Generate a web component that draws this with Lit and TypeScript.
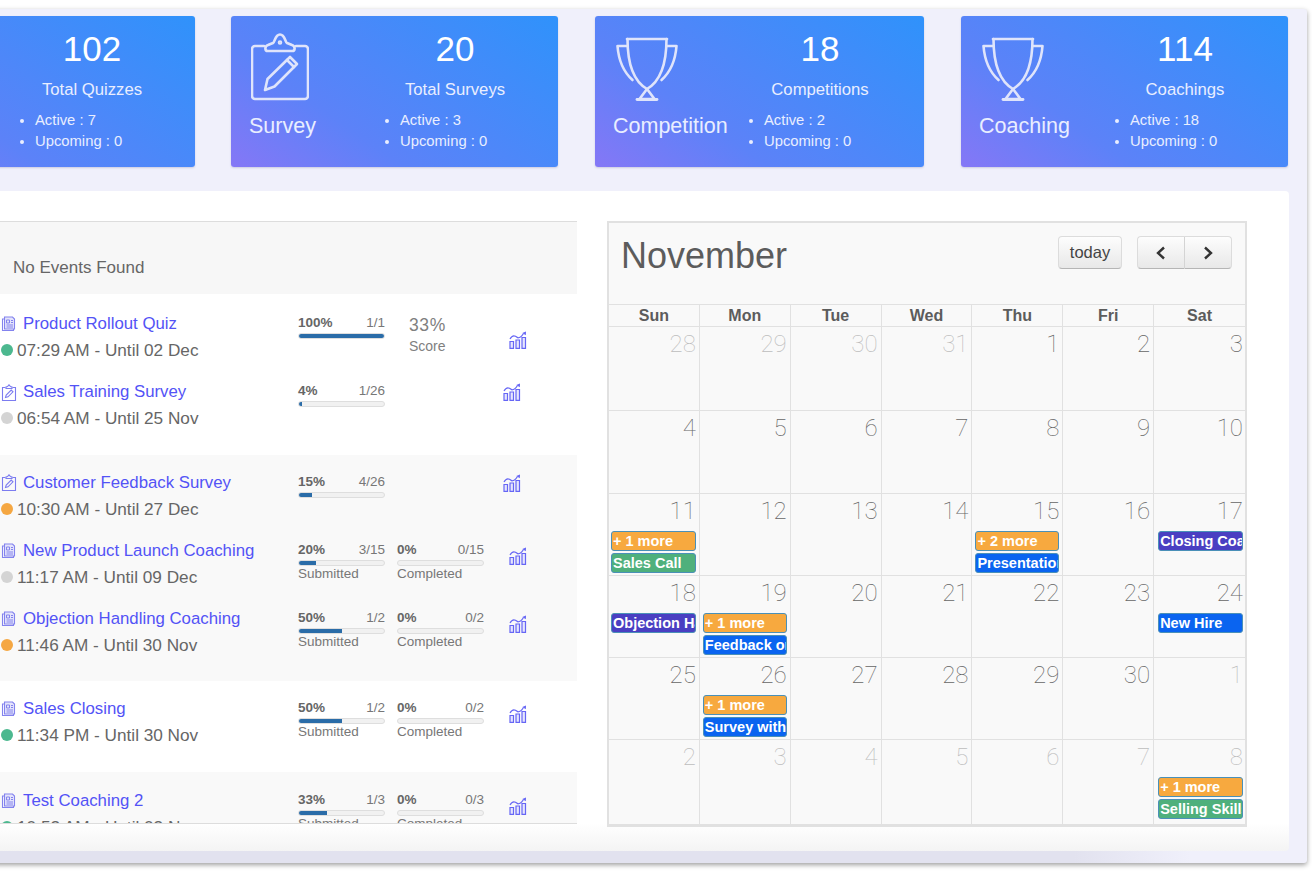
import { LitElement, css, html, nothing, svg } from 'lit'
import { customElement } from 'lit/decorators.js'

type Stat = { pct: number; value: string; label?: string }
type Row = {
  name: string
  kind: 'doc' | 'clip'
  time: string
  dot: string
  stats: Stat[]
  score?: string
  chartX: number
  chartY: number
}
type Group = { shaded: boolean; padTop: number; padBottom: number; rows: Row[] }
type CalEvent = { text: string; color: string }
type Day = { n: number; muted?: boolean; events?: CalEvent[] }

const GREEN = '#4cb88f'
const GREY = '#d4d4d4'
const ORANGE = '#f5a742'

const groups: Group[] = [
  {
    shaded: false,
    padTop: 13,
    padBottom: 12,
    rows: [
      { name: 'Product Rollout Quiz', kind: 'doc', time: '07:29 AM - Until 02 Dec', dot: GREEN, stats: [{ pct: 100, value: '1/1' }], score: '33%', chartX: 509, chartY: 24 },
      { name: 'Sales Training Survey', kind: 'clip', time: '06:54 AM - Until 25 Nov', dot: GREY, stats: [{ pct: 4, value: '1/26' }], chartX: 503, chartY: 8 },
    ],
  },
  {
    shaded: true,
    padTop: 10.5,
    padBottom: 11.5,
    rows: [
      { name: 'Customer Feedback Survey', kind: 'clip', time: '10:30 AM - Until 27 Dec', dot: ORANGE, stats: [{ pct: 15, value: '4/26' }], chartX: 503, chartY: 8 },
      { name: 'New Product Launch Coaching', kind: 'doc', time: '11:17 AM - Until 09 Dec', dot: GREY, stats: [{ pct: 20, value: '3/15', label: 'Submitted' }, { pct: 0, value: '0/15', label: 'Completed' }], chartX: 509, chartY: 13 },
      { name: 'Objection Handling Coaching', kind: 'doc', time: '11:46 AM - Until 30 Nov', dot: ORANGE, stats: [{ pct: 50, value: '1/2', label: 'Submitted' }, { pct: 0, value: '0/2', label: 'Completed' }], chartX: 509, chartY: 13 },
    ],
  },
  {
    shaded: false,
    padTop: 11,
    padBottom: 12,
    rows: [
      { name: 'Sales Closing', kind: 'doc', time: '11:34 PM - Until 30 Nov', dot: GREEN, stats: [{ pct: 50, value: '1/2', label: 'Submitted' }, { pct: 0, value: '0/2', label: 'Completed' }], chartX: 509, chartY: 13 },
    ],
  },
  {
    shaded: true,
    padTop: 12,
    padBottom: 12,
    rows: [
      { name: 'Test Coaching 2', kind: 'doc', time: '10:52 AM - Until 03 Nov', dot: GREEN, stats: [{ pct: 33, value: '1/3', label: 'Submitted' }, { pct: 0, value: '0/3', label: 'Completed' }], chartX: 509, chartY: 13 },
    ],
  },
]

const more = (n: number): CalEvent => ({ text: `+ ${n} more`, color: '#f7a93f' })
const ev = {
  green: (text: string): CalEvent => ({ text, color: '#4fb07c' }),
  blue: (text: string): CalEvent => ({ text, color: '#0a64f0' }),
  indigo: (text: string): CalEvent => ({ text, color: '#4a3fc2' }),
}

const weeks: Day[][] = [
  [{ n: 28, muted: true }, { n: 29, muted: true }, { n: 30, muted: true }, { n: 31, muted: true }, { n: 1 }, { n: 2 }, { n: 3 }],
  [{ n: 4 }, { n: 5 }, { n: 6 }, { n: 7 }, { n: 8 }, { n: 9 }, { n: 10 }],
  [
    { n: 11, events: [more(1), ev.green('Sales Call')] },
    { n: 12 },
    { n: 13 },
    { n: 14 },
    { n: 15, events: [more(2), ev.blue('Presentation Skills')] },
    { n: 16 },
    { n: 17, events: [ev.indigo('Closing Coaching')] },
  ],
  [
    { n: 18, events: [ev.indigo('Objection Handling')] },
    { n: 19, events: [more(1), ev.blue('Feedback on Sales')] },
    { n: 20 },
    { n: 21 },
    { n: 22 },
    { n: 23 },
    { n: 24, events: [ev.blue('New Hire')] },
  ],
  [
    { n: 25 },
    { n: 26, events: [more(1), ev.blue('Survey with Team')] },
    { n: 27 },
    { n: 28 },
    { n: 29 },
    { n: 30 },
    { n: 1, muted: true },
  ],
  [
    { n: 2, muted: true },
    { n: 3, muted: true },
    { n: 4, muted: true },
    { n: 5, muted: true },
    { n: 6, muted: true },
    { n: 7, muted: true },
    { n: 8, muted: true, events: [more(1), ev.green('Selling Skills')] },
  ],
]

const summary = [
  { icon: 'doc', title: 'Quiz', count: '102', label: 'Total Quizzes', active: 7, upcoming: 0 },
  { icon: 'clip', title: 'Survey', count: '20', label: 'Total Surveys', active: 3, upcoming: 0 },
  { icon: 'cup', title: 'Competition', count: '18', label: 'Competitions', active: 2, upcoming: 0 },
  { icon: 'cup', title: 'Coaching', count: '114', label: 'Coachings', active: 18, upcoming: 0 },
]

const clipIcon = svg`<svg width="58" height="68" viewBox="0 0 58 68" fill="none" stroke="#dfe4fb" stroke-width="2.6" stroke-linejoin="round" stroke-linecap="round">
  <path d="M13 13H4a3 3 0 0 0-3 3v47a3 3 0 0 0 3 3h50a3 3 0 0 0 3-3V16a3 3 0 0 0-3-3h-9" />
  <path d="M17 18h24c3.500 0 3.500-5 0-6l-5-2c-2-1-2-8.500-7-8.500S24 9 22 10l-5 2c-3.500 1-3.500 6 0 6z" />
  <circle cx="29" cy="9.500" r="1" />
  <path d="M14 57l2.500-11L39 24l7 7-22.500 22.500z" />
  <path d="M36 27l7 7" />
</svg>`

const cupIcon = svg`<svg class="cup" width="62" height="64" viewBox="0 0 62 64" fill="none" stroke="#dfe4fb" stroke-width="2.6" stroke-linejoin="round" stroke-linecap="round">
  <path d="M11 2h40" />
  <path d="M11.500 2c0 22 4 41 19.500 50C46.500 43 50.500 24 50.500 2" />
  <path d="M11.500 9H1.500c1 13 5 25 15 34M50.500 9h10c-1 13-5 25-15 34" />
  <path d="M31 52l-7.500 10h15z" />
  <path d="M21 62.500h20" stroke-width="2.800" />
</svg>`

const smallDoc = svg`<svg width="16" height="16" viewBox="0 0 16 16" fill="none" stroke="#8383ee" stroke-width="1.100">
  <path d="M3.500 1h8l2 2v10h-10z" fill="#e4e4fb" />
  <path d="M3.500 3H1.500v11.500h11V13" />
  <path d="M5.500 4h3v3h-3zM10 4.500h2M10 6.500h2M5.500 9h6.500M5.500 11h6.500" stroke-width="1" />
</svg>`

const smallClip = svg`<svg width="16" height="17" viewBox="0 0 16 17" fill="none" stroke="#7c7cf0" stroke-width="1.100">
  <path d="M4.500 3.500H1.500v13h13v-13h-3" />
  <path d="M5 4.500h6V3L9.500 2.500 8 .8 6.500 2.500 5 3z" />
  <path d="M4.500 13.500l.7-2.500 5-5 1.800 1.800-5 5z" />
</svg>`

const chartIcon = svg`<svg width="18" height="18" viewBox="0 0 18 18" fill="none" stroke="#6666f5" stroke-width="1.200">
  <path d="M1 17.400V10.500h3.500v6.900zM7 17.400V9h3.500v8.400zM13 17.400V6.500h3.500v10.900z" fill="#e6e6fd" />
  <path d="M1 8c1.500-2.800 3.500-3.800 5.500-2.800L9 6.800c2 0 4-1.800 5.500-4.300" />
  <path d="M13.300 2l3.700-1.500-.2 3.800z" fill="#6666f5" stroke="none" />
</svg>`

@customElement('app-root')
export class AppRoot extends LitElement {
  static styles = css`
    :host {
      display: block;
      width: 1312px;
      height: 874px;
      overflow: hidden;
      background: #fff;
      font-family: 'Liberation Sans', Arial, sans-serif;
      color: #666;
    }
    .frame {
      box-sizing: border-box;
      width: 1457px;
      height: 854px;
      margin: 9px 0 0 -150px;
      padding-top: 7px;
      background: linear-gradient(to right, #e2e2ef 84%, #f0f0fb 92%) left bottom / 100% 12px no-repeat, #f0f0fb;
      box-shadow: 0 2px 5px rgba(0, 0, 0, 0.38);
      border-radius: 0 3px 3px 0;
    }
    .cards {
      display: grid;
      grid-template-columns: 326px 327px 329px 327px;
      column-gap: 37px;
      padding-left: 18px;
    }
    .card {
      display: flex;
      height: 151px;
      border-radius: 3px;
      background: linear-gradient(35deg, #8577f6 0%, #5c82f8 32%, #2f92fb 100%);
      box-shadow: 0 1px 2px rgba(60, 60, 120, 0.2);
      color: #e9eeff;
    }
    .card:first-child {
      margin-right: -1px;
    }
    .card-left {
      box-sizing: border-box;
      width: 121px;
      padding-left: 18px;
      white-space: nowrap;
    }
    .card-icon {
      display: flex;
      align-items: flex-end;
      height: 85px;
      padding-left: 2px;
    }
    .card-icon .cup {
      margin-left: 1px;
    }
    .card-title {
      margin-top: 13px;
      font-size: 21.5px;
      line-height: 24px;
    }
    .card-right {
      flex: 1;
      padding-top: 13px;
    }
    .count {
      font-size: 35px;
      line-height: 40px;
      text-align: center;
      color: #fff;
    }
    .count-label {
      margin-top: 11px;
      font-size: 16.7px;
      line-height: 20px;
      text-align: center;
    }
    .card-right ul {
      margin: 10px 0 0;
      padding: 0 0 0 48px;
      font-size: 14.8px;
      line-height: 21px;
    }
    .card:first-child .card-right ul {
      padding-left: 46px;
    }
    .panel {
      display: flex;
      gap: 30px;
      box-sizing: border-box;
      height: 660px;
      margin: 24px 18px 0 10px;
      padding: 30px 42px 0 140px;
      border-radius: 0 4px 4px 0;
      background: linear-gradient(to top, #f4f4f4, #fff 28px);
    }
    .list {
      box-sizing: border-box;
      width: 577px;
      height: 603px;
      overflow: hidden;
      border-top: 1px solid #ddd;
      border-bottom: 1px solid #ddd;
    }
    .empty {
      box-sizing: border-box;
      height: 72px;
      padding: 36px 0 0 13px;
      font-size: 17px;
      line-height: 20px;
      background: #f7f7f7;
    }
    .group {
      background: #fff;
    }
    .group.shaded {
      background: #f9f9f9;
    }
    .row {
      display: flex;
      box-sizing: border-box;
      height: 68px;
    }
    .name {
      width: 298px;
      flex: none;
      padding-top: 6px;
      white-space: nowrap;
    }
    .title {
      display: flex;
      align-items: center;
      gap: 6px;
      padding-left: 1px;
      font-size: 16.8px;
      line-height: 22px;
      color: #5353f6;
    }
    .time {
      display: flex;
      align-items: center;
      gap: 4px;
      margin-top: 4px;
      padding-left: 1px;
      font-size: 17.2px;
      line-height: 22px;
    }
    .dot {
      width: 12px;
      height: 12px;
      border-radius: 50%;
    }
    .stats {
      display: flex;
      gap: 12px;
      width: 186px;
      flex: none;
      padding-top: 9px;
    }
    .stat {
      width: 87px;
      flex: none;
      font-size: 13.5px;
      line-height: 14px;
      color: #777;
    }
    .stat-head {
      display: flex;
      justify-content: space-between;
    }
    .stat-head b {
      color: #666;
    }
    .bar {
      box-sizing: border-box;
      height: 6px;
      margin: 3px 0 1px;
      border: 1px solid #dedede;
      border-radius: 3px;
      background: #f1f1f1;
      overflow: hidden;
    }
    .bar i {
      display: block;
      height: 100%;
      background: #2a6ca8;
    }
    .score {
      width: 87px;
      flex: none;
      padding: 0 0 0 12px;
      color: #808080;
    }
    .score b {
      display: block;
      margin-top: -1px;
      font-size: 17.5px;
      font-weight: 400;
      letter-spacing: 0.6px;
      line-height: 20px;
    }
    .score span {
      display: block;
      margin-top: 2px;
      font-size: 14px;
      line-height: 18px;
    }
    .chart {
      display: block;
    }
    .calendar {
      box-sizing: border-box;
      width: 640px;
      height: 606px;
      border: 2px solid #e1e1e1;
      background: #f9f9f9;
    }
    .cal-head {
      display: flex;
      justify-content: space-between;
      box-sizing: border-box;
      height: 81px;
      padding: 13px 13px 0 12px;
    }
    .cal-head h2 {
      margin: 1px 0 0;
      font-size: 36px;
      font-weight: 400;
      line-height: 38px;
      color: #5c5c5c;
    }
    .cal-tools {
      display: flex;
      gap: 15px;
    }
    .btn {
      display: flex;
      align-items: center;
      justify-content: center;
      box-sizing: border-box;
      height: 33px;
      padding: 0;
      border: 1px solid #dcdcdc;
      border-bottom-color: #b5b5b5;
      border-radius: 4px;
      background: linear-gradient(#fdfdfd, #e8e8e8);
      font: 16.5px 'Liberation Sans', Arial, sans-serif;
      color: #444;
    }
    .today {
      width: 64px;
    }
    .nav {
      display: flex;
    }
    .nav .btn {
      width: 48px;
    }
    .nav .btn:first-child {
      border-radius: 4px 0 0 4px;
      border-right: 1px solid #d4d4d4;
    }
    .nav .btn:last-child {
      width: 47px;
      border-left: 0;
      border-radius: 0 4px 4px 0;
    }
    .days,
    .weeks {
      display: grid;
      grid-template-columns: repeat(7, 1fr);
    }
    .days {
      box-sizing: border-box;
      height: 23px;
      border-top: 1px solid #e1e1e1;
      border-bottom: 1px solid #e1e1e1;
    }
    .days div {
      border-right: 1px solid #e1e1e1;
      font-size: 16px;
      font-weight: 700;
      line-height: 21px;
      text-align: center;
      color: #5c5c5c;
    }
    .weeks {
      grid-template-rows: 84px 83px 82px 82px 82px 85px;
    }
    .cell {
      box-sizing: border-box;
      min-width: 0;
      padding: 0 3px;
      border-right: 1px solid #e1e1e1;
      border-bottom: 1px solid #e1e1e1;
    }
    .cell:nth-child(7n + 1) {
      padding-left: 2px;
    }
    .cell:nth-child(7n) {
      padding: 0 2px 0 4px;
    }
    .days div:last-child,
    .cell:nth-child(7n) {
      border-right: 0;
    }
    .num {
      height: 37px;
      font-family: Roboto, 'Liberation Sans', sans-serif;
      font-size: 24px;
      font-weight: 100;
      line-height: 35px;
      text-align: right;
      color: #666;
    }
    .cell.muted .num {
      color: #bdbdbd;
    }
    .event {
      box-sizing: border-box;
      height: 20px;
      margin: 0 0 2px;
      padding: 0 0 0 1px;
      border: 1px solid #4a90b8;
      border-radius: 3px;
      overflow: hidden;
      white-space: nowrap;
      font-size: 14.5px;
      font-weight: 700;
      line-height: 18px;
      color: #fff;
    }
  `

  private cardIcon(kind: string) {
    return kind === 'cup' ? cupIcon : clipIcon
  }

  private renderStat(s: Stat) {
    return html`
      <div class="stat">
        <div class="stat-head"><b>${s.pct}%</b><span>${s.value}</span></div>
        <div class="bar"><i style="width:${s.pct}%"></i></div>
        ${s.label ?? nothing}
      </div>
    `
  }

  private renderRow(r: Row) {
    return html`
      <div class="row">
        <div class="name">
          <div class="title">${r.kind === 'doc' ? smallDoc : smallClip}${r.name}</div>
          <div class="time"><span class="dot" style="background:${r.dot}"></span>${r.time}</div>
        </div>
        <div class="stats">
          ${r.stats.map((s) => this.renderStat(s))}
          ${r.score
            ? html`<div class="score"><b>${r.score}</b><span>Score</span></div>`
            : nothing}
        </div>
        <div class="chart" style="margin:${r.chartY}px 0 0 ${r.chartX - 484}px">${chartIcon}</div>
      </div>
    `
  }

  private renderDay(d: Day) {
    return html`
      <div class="cell ${d.muted ? 'muted' : ''}">
        <div class="num">${d.n}</div>
        ${(d.events ?? []).map(
          (e) => html`<div class="event" style="background:${e.color}">${e.text}</div>`,
        )}
      </div>
    `
  }

  render() {
    return html`
      <div class="frame">
        <div class="cards">
          ${summary.map(
            (c) => html`
              <div class="card">
                <div class="card-left">
                  <div class="card-icon">${this.cardIcon(c.icon)}</div>
                  <div class="card-title">${c.title}</div>
                </div>
                <div class="card-right">
                  <div class="count">${c.count}</div>
                  <div class="count-label">${c.label}</div>
                  <ul>
                    <li>Active : ${c.active}</li>
                    <li>Upcoming : ${c.upcoming}</li>
                  </ul>
                </div>
              </div>
            `,
          )}
        </div>
        <div class="panel">
          <div class="list">
            <div class="empty">No Events Found</div>
            ${groups.map(
              (g) => html`
                <div class="group ${g.shaded ? 'shaded' : ''}" style="padding:${g.padTop}px 0 ${g.padBottom}px">
                  ${g.rows.map((r) => this.renderRow(r))}
                </div>
              `,
            )}
          </div>
          <div class="calendar">
            <div class="cal-head">
              <h2>November</h2>
              <div class="cal-tools">
                <button class="btn today">today</button>
                <div class="nav">
                  <button class="btn" aria-label="Previous">
                    <svg width="12" height="14" viewBox="0 0 12 14" fill="none" stroke="#333" stroke-width="2.400"><path d="M9 1.500 3 7l6 5.500" /></svg>
                  </button>
                  <button class="btn" aria-label="Next">
                    <svg width="12" height="14" viewBox="0 0 12 14" fill="none" stroke="#333" stroke-width="2.400"><path d="M3 1.500 9 7l-6 5.500" /></svg>
                  </button>
                </div>
              </div>
            </div>
            <div class="days">
              ${['Sun', 'Mon', 'Tue', 'Wed', 'Thu', 'Fri', 'Sat'].map((d) => html`<div>${d}</div>`)}
            </div>
            <div class="weeks">${weeks.flat().map((d) => this.renderDay(d))}</div>
          </div>
        </div>
      </div>
    `
  }
}

declare global {
  interface HTMLElementTagNameMap {
    'app-root': AppRoot
  }
}
